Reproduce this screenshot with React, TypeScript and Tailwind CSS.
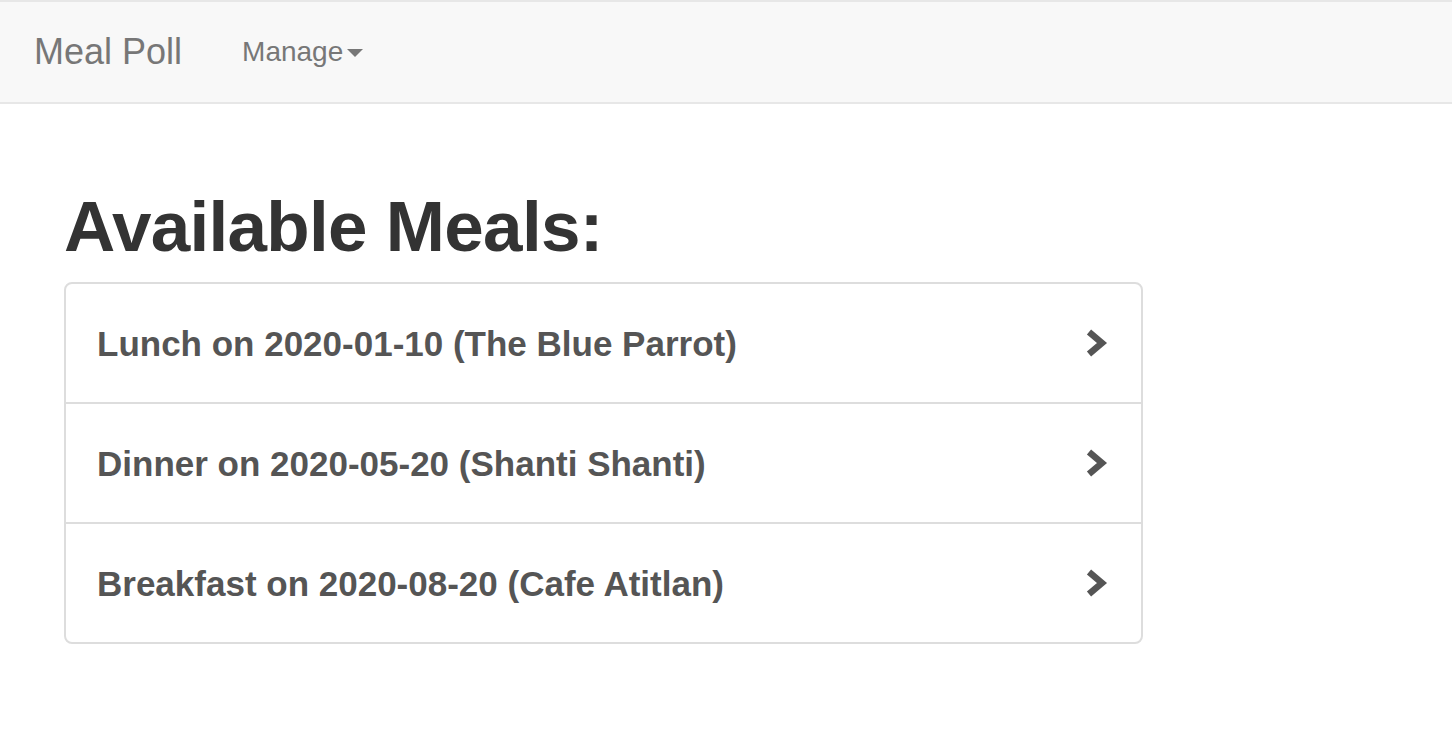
const meals = [
  "Lunch on 2020-01-10 (The Blue Parrot)",
  "Dinner on 2020-05-20 (Shanti Shanti)",
  "Breakfast on 2020-08-20 (Cafe Atitlan)",
];

function Chevron() {
  return (
    <svg width="24" height="28" viewBox="0 0 24 28" className="shrink-0">
      <polyline points="5,3 18,14 5,25" fill="none" stroke="#555555" strokeWidth="6.5" strokeLinejoin="miter" />
    </svg>
  );
}

export default function App() {
  return (
    <div className="min-h-screen bg-white font-['Liberation_Sans',Arial,sans-serif]">
      {/* navbar */}
      <nav className="h-[104px] border-y-2 border-[#e7e7e7] bg-[#f8f8f8] flex items-center px-[30px]">
        <a href="#" className="text-[36px] text-[#777777] leading-none pl-[4px]">
          Meal Poll
        </a>
        <a href="#" className="ml-[60px] flex items-center text-[28px] text-[#777777] leading-none">
          Manage
          <span className="ml-[4px] mt-[2px] w-0 h-0 border-x-[8px] border-x-transparent border-t-[8px] border-t-[#777777]" />
        </a>
      </nav>

      <div className="px-[64px]">
        <h1 className="mt-[83px] mb-[16px] text-[71px] leading-[79px] font-bold text-[#333333] tracking-[-0.7px]">
          Available Meals:
        </h1>
        <div className="w-[1079px] border-2 border-[#dddddd] rounded-[8px] divide-y-2 divide-[#dddddd]">
          {meals.map((m) => (
            <a key={m} href="#" className="h-[118px] flex items-center justify-between pl-[31px] pr-[33px] box-content">
              <span className="text-[35px] font-bold text-[#555555] leading-none">{m}</span>
              <Chevron />
            </a>
          ))}
        </div>
      </div>
    </div>
  );
}
